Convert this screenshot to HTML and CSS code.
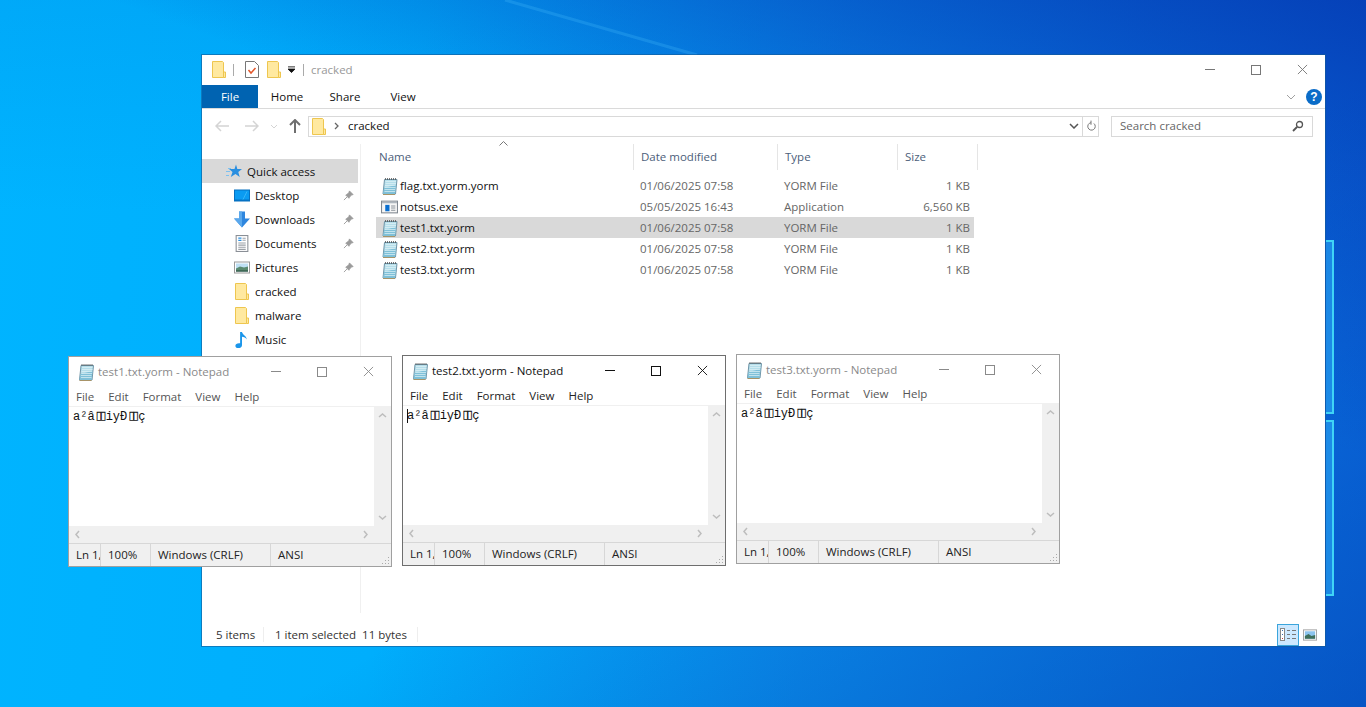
FILE: index.html
```html
<!DOCTYPE html>
<html lang="en">

<head>
    <meta charset="utf-8">
    <title>cracked</title>
    <link rel="stylesheet" href="styles.css">
</head>

<body>
    <svg width="0" height="0" class="defs">
        <symbol id="i-folder" viewBox="0 0 14 17">
            <path d="M.5.5h10l1 1v15H.5z" fill="#ffe9a0" stroke="#eec64f" />
            <path d="M11.500 11h2v5.500h-2z" fill="#ffe9a0" stroke="#eec64f" />
        </symbol>
        <symbol id="i-note" viewBox="0 0 16 18">
            <path d="M3 2.500h12.500L14 17H1.500z" fill="#b5deea" stroke="#6f95a8" />
            <path d="M2.500 11l12-3-1 9H1.500z" fill="#7fc0d8" />
            <path d="M4 4.500h10.500M4 6.500h10.500M3.500 8.500h10.500M3.500 10.500h10.500M3 12.500h10.500M3 14.500h10.500" stroke="#dff2f7" stroke-width=".7" />
            <path d="M4 1v2M6 1v2M8 1v2M10 1v2M12 1v2M14 1v2" stroke="#555" stroke-width=".8" />
            <path d="M1.500 17.500h12" stroke="#a89468" />
        </symbol>
        <symbol id="i-exe" viewBox="0 0 16 14">
            <rect x=".5" y="1.500" width="15" height="11" fill="#f6f6f6" stroke="#808891" />
            <path d="M1 2h14v1.500H1z" fill="#aeb6be" />
            <rect x="4" y="5" width="4" height="6" fill="#0a6fd0" />
            <path d="M9.500 6h4M9.500 8h4M9.500 10h4" stroke="#8a929a" />
        </symbol>
        <symbol id="i-star" viewBox="0 0 16 16">
            <path d="M10 1l1.300 4.500h4.700l-3.700 2.900 1.400 5.100-4.200-3-4.700 3 1.700-5.100L3 5.500h5.500z" fill="#2a8fe0" />
            <path d="M0 8h4M2 5h3M0 12h3" stroke="#7cc0f0" />
        </symbol>
        <symbol id="i-desktop" viewBox="0 0 16 14">
            <rect x=".5" y="1.500" width="15" height="11" fill="#0a9bf2" stroke="#0670c0" />
            <path d="M1 11h14v1.500H1z" fill="#0572c4" />
            <path d="M9 11l4-8" stroke="#36b4f8" />
        </symbol>
        <symbol id="i-down" viewBox="0 0 16 16">
            <path d="M5 0h6v7h5l-8 9-8-9h5z" fill="#2f86de" />
            <path d="M5 0h3v16L0 7h5z" fill="#5aa8ec" />
        </symbol>
        <symbol id="i-docs" viewBox="0 0 14 16">
            <rect x="1.500" y=".5" width="11" height="15" fill="#fff" stroke="#8a8f96" />
            <path d="M3.500 3h3M3.500 5h3" stroke="#2a8fe0" stroke-width="1.200" />
            <path d="M7.500 3h3M7.500 5h3M3.500 7.500h7M3.500 9.500h7M3.500 11.500h7M3.500 13.500h7" stroke="#9aa0a6" />
        </symbol>
        <symbol id="i-pics" viewBox="0 0 16 14">
            <rect x=".5" y="1.500" width="15" height="11" fill="#fff" stroke="#9a9a9a" />
            <rect x="2" y="3" width="12" height="8" fill="#bfe0f4" />
            <path d="M2 8l4-2 4 1 4-1v5H2z" fill="#5a8a70" />
            <path d="M2 10h12v1H2z" fill="#274a3c" />
        </symbol>
        <symbol id="i-music" viewBox="0 0 14 18">
            <path d="M5 1h2c.5 3 5 4 5 8-1-2-3-3-5-3v9c0 2-2 3-4 3s-3-1-3-2.500S2 12.500 5 13z" fill="#1b96ea" />
        </symbol>
        <symbol id="i-pin" viewBox="0 0 12 12">
            <path d="M7 1l4 4-2 .5L7 8 6.500 9 3 5.500 4 5l2.500-2zM4.500 7.500L1 11" fill="#9a9a9a" stroke="#9a9a9a" />
        </symbol>
        <symbol id="i-close" viewBox="0 0 12 12">
            <path d="M1 1l10 10M11 1L1 11" stroke="currentColor" fill="none" />
        </symbol>
    </svg>

    <svg class="beams" width="1366" height="707">
        <path d="M505 0L697 55" stroke="#3fb4f8" stroke-width="3" opacity=".3" />
        <path d="M1326 241h7v172h-7M1326 421h7v174h-7" fill="#2aa6f5" fill-opacity=".6" stroke="#3fd4f6" stroke-width="2" />
    </svg>

    <div class="explorer">
        <div class="titlebar">
            <svg class="ico-qa"><use href="#i-folder" /></svg>
            <span class="qa-sep"></span>
            <svg class="ico-check" viewBox="0 0 14 17">
                <path d="M.5.5h9l4 4v12H.5z" fill="#fff" stroke="#777" />
                <path d="M3.500 9l2.500 3 4.500-5" fill="none" stroke="#e2562a" stroke-width="1.500" />
            </svg>
            <svg class="ico-qa"><use href="#i-folder" /></svg>
            <svg class="qa-drop" viewBox="0 0 8 7">
                <path d="M0 .5h8M0 3h8L4 7z" stroke="#111" fill="#111" />
            </svg>
            <span class="qa-sep qa-sep-end"></span>
            <span class="title-text">cracked</span>
            <div class="caption">
                <span class="cap-min"></span>
                <span class="cap-max"></span>
                <svg class="cap-close"><use href="#i-close" /></svg>
            </div>
        </div>

        <div class="ribbon">
            <span class="tab tab-file">File</span>
            <span class="tab">Home</span>
            <span class="tab">Share</span>
            <span class="tab">View</span>
            <svg class="ribbon-chev" viewBox="0 0 10 6"><path d="M1 1l4 4 4-4" fill="none" stroke="#a0a0a0" /></svg>
            <span class="help">?</span>
        </div>

        <div class="addr-row">
            <svg class="nav-arrow" viewBox="0 0 14 12"><path d="M6 1L1 6l5 5M1 6h13" fill="none" stroke="#d4d4d4" stroke-width="1.500" /></svg>
            <svg class="nav-arrow" viewBox="0 0 14 12"><path d="M8 1l5 5-5 5M13 6H0" fill="none" stroke="#d4d4d4" stroke-width="1.500" /></svg>
            <svg class="nav-drop" viewBox="0 0 8 5"><path d="M1 1l3 3 3-3" fill="none" stroke="#d4d4d4" /></svg>
            <svg class="nav-arrow nav-up" viewBox="0 0 12 14"><path d="M1 6l5-5 5 5M6 1v13" fill="none" stroke="#6f6f6f" stroke-width="2" /></svg>
            <div class="addr">
                <svg class="ico-addr"><use href="#i-folder" /></svg>
                <svg class="crumb" viewBox="0 0 5 8"><path d="M1 1l3 3-3 3" fill="none" stroke="#666" stroke-width="1.300" /></svg>
                <span class="addr-text">cracked</span>
                <svg class="addr-chev" viewBox="0 0 10 6"><path d="M1 1l4 4 4-4" fill="none" stroke="#555" stroke-width="1.500" /></svg>
                <span class="addr-refresh">
                    <svg viewBox="0 0 12 13"><path d="M9.500 3.500A4.500 4.500 0 1 1 6 2.500M6 0v5" fill="none" stroke="#777" stroke-width="1.200" /></svg>
                </span>
            </div>
            <div class="search">
                <span class="search-text">Search cracked</span>
                <svg viewBox="0 0 12 12"><circle cx="7.500" cy="4.500" r="3" fill="none" stroke="#555" stroke-width="1.300" /><path d="M5 7l-4 4" stroke="#555" stroke-width="1.800" /></svg>
            </div>
        </div>

        <div class="main">
            <nav class="navpane">
                <div class="nav-item nav-head"><svg><use href="#i-star" /></svg><span>Quick access</span></div>
                <div class="nav-item"><svg><use href="#i-desktop" /></svg><span>Desktop</span><svg class="pin"><use href="#i-pin" /></svg></div>
                <div class="nav-item"><svg><use href="#i-down" /></svg><span>Downloads</span><svg class="pin"><use href="#i-pin" /></svg></div>
                <div class="nav-item"><svg><use href="#i-docs" /></svg><span>Documents</span><svg class="pin"><use href="#i-pin" /></svg></div>
                <div class="nav-item"><svg><use href="#i-pics" /></svg><span>Pictures</span><svg class="pin"><use href="#i-pin" /></svg></div>
                <div class="nav-item"><svg><use href="#i-folder" /></svg><span>cracked</span></div>
                <div class="nav-item"><svg><use href="#i-folder" /></svg><span>malware</span></div>
                <div class="nav-item"><svg><use href="#i-music" /></svg><span>Music</span></div>
            </nav>
            <div class="files">
                <div class="file-head">
                    <span class="col-name">Name<svg class="sort" viewBox="0 0 9 5"><path d="M.5 4.500l4-4 4 4" fill="none" stroke="#777" /></svg></span>
                    <span class="col-date">Date modified</span>
                    <span class="col-type">Type</span>
                    <span class="col-size">Size</span>
                </div>
                <div class="file-row">
                    <span class="col-name"><svg><use href="#i-note" /></svg>flag.txt.yorm.yorm</span>
                    <span class="col-date">01/06/2025 07:58</span>
                    <span class="col-type">YORM File</span>
                    <span class="col-size">1 KB</span>
                </div>
                <div class="file-row">
                    <span class="col-name"><svg><use href="#i-exe" /></svg>notsus.exe</span>
                    <span class="col-date">05/05/2025 16:43</span>
                    <span class="col-type">Application</span>
                    <span class="col-size">6,560 KB</span>
                </div>
                <div class="file-row selected">
                    <span class="col-name"><svg><use href="#i-note" /></svg>test1.txt.yorm</span>
                    <span class="col-date">01/06/2025 07:58</span>
                    <span class="col-type">YORM File</span>
                    <span class="col-size">1 KB</span>
                </div>
                <div class="file-row">
                    <span class="col-name"><svg><use href="#i-note" /></svg>test2.txt.yorm</span>
                    <span class="col-date">01/06/2025 07:58</span>
                    <span class="col-type">YORM File</span>
                    <span class="col-size">1 KB</span>
                </div>
                <div class="file-row">
                    <span class="col-name"><svg><use href="#i-note" /></svg>test3.txt.yorm</span>
                    <span class="col-date">01/06/2025 07:58</span>
                    <span class="col-type">YORM File</span>
                    <span class="col-size">1 KB</span>
                </div>
            </div>
        </div>

        <div class="statusbar">
            <span class="st-count">5 items</span>
            <span class="st-sel">1 item selected</span>
            <span class="st-bytes">11 bytes</span>
            <div class="views">
                <span class="view-btn view-on">
                    <svg viewBox="0 0 17 13"><rect x=".5" y=".5" width="4" height="12" fill="#fff" stroke="#888" /><path d="M2 2.500h1" stroke="#3a6fb0" /><path d="M2 6.500h1" stroke="#3a6fb0" /><path d="M2 10.500h1" stroke="#c04040" /><path d="M7 2.500h3M12 2.500h4M7 6.500h3M12 6.500h4M7 10.500h3M12 10.500h4" stroke="#777" stroke-width="1.200" /></svg>
                </span>
                <span class="view-btn view-big">
                    <svg viewBox="0 0 15 12"><rect x=".5" y=".5" width="14" height="11" fill="#fff" stroke="#a0a0a0" /><rect x="2" y="2" width="11" height="8" fill="#8cc4ee" /><path d="M2 7l4-2 3 2 4-1v4H2z" fill="#3f6f5a" /></svg>
                </span>
            </div>
        </div>
    </div>

    <div class="notepad np-1">
        <div class="np-title">
            <svg class="np-ico"><use href="#i-note" /></svg>
            <span class="np-name">test1.txt.yorm - Notepad</span>
            <div class="np-caption">
                <span class="cap-min"></span>
                <span class="cap-max"></span>
                <svg class="cap-close"><use href="#i-close" /></svg>
            </div>
        </div>
        <div class="np-menu"><span>File</span><span>Edit</span><span>Format</span><span>View</span><span>Help</span></div>
        <div class="np-body">
            <div class="np-text">a²â<span class="tofu">▯▯</span>iyÐ<span class="tofu">▯▯</span>ç</div>
            <div class="np-vscroll">
                <svg viewBox="0 0 9 5"><path d="M1 4l3.500-3L8 4" fill="none" stroke="#bdbdbd" stroke-width="1.500" /></svg>
                <svg viewBox="0 0 9 5"><path d="M1 1l3.500 3L8 1" fill="none" stroke="#bdbdbd" stroke-width="1.500" /></svg>
            </div>
        </div>
        <div class="np-hscroll">
            <svg viewBox="0 0 5 9"><path d="M4 1L1 4.500 4 8" fill="none" stroke="#bdbdbd" stroke-width="1.500" /></svg>
            <svg viewBox="0 0 5 9"><path d="M1 1l3 3.500L1 8" fill="none" stroke="#bdbdbd" stroke-width="1.500" /></svg>
        </div>
        <div class="np-status">
            <span class="s-ln">Ln 1,</span><span class="s-zoom">100%</span><span class="s-eol">Windows (CRLF)</span><span class="s-enc">ANSI</span>
            <svg class="grip" viewBox="0 0 9 9"><path d="M7 1h1v1H7zM4 4h1v1H4zM7 4h1v1H7zM1 7h1v1H1zM4 7h1v1H4zM7 7h1v1H7z" fill="#aaa" /></svg>
        </div>
    </div>

    <div class="notepad np-2 active">
        <div class="np-title">
            <svg class="np-ico"><use href="#i-note" /></svg>
            <span class="np-name">test2.txt.yorm - Notepad</span>
            <div class="np-caption">
                <span class="cap-min"></span>
                <span class="cap-max"></span>
                <svg class="cap-close"><use href="#i-close" /></svg>
            </div>
        </div>
        <div class="np-menu"><span>File</span><span>Edit</span><span>Format</span><span>View</span><span>Help</span></div>
        <div class="np-body">
            <div class="np-text"><i class="caret"></i>a²â<span class="tofu">▯▯</span>iyÐ<span class="tofu">▯▯</span>ç</div>
            <div class="np-vscroll">
                <svg viewBox="0 0 9 5"><path d="M1 4l3.500-3L8 4" fill="none" stroke="#bdbdbd" stroke-width="1.500" /></svg>
                <svg viewBox="0 0 9 5"><path d="M1 1l3.500 3L8 1" fill="none" stroke="#bdbdbd" stroke-width="1.500" /></svg>
            </div>
        </div>
        <div class="np-hscroll">
            <svg viewBox="0 0 5 9"><path d="M4 1L1 4.500 4 8" fill="none" stroke="#bdbdbd" stroke-width="1.500" /></svg>
            <svg viewBox="0 0 5 9"><path d="M1 1l3 3.500L1 8" fill="none" stroke="#bdbdbd" stroke-width="1.500" /></svg>
        </div>
        <div class="np-status">
            <span class="s-ln">Ln 1,</span><span class="s-zoom">100%</span><span class="s-eol">Windows (CRLF)</span><span class="s-enc">ANSI</span>
            <svg class="grip" viewBox="0 0 9 9"><path d="M7 1h1v1H7zM4 4h1v1H4zM7 4h1v1H7zM1 7h1v1H1zM4 7h1v1H4zM7 7h1v1H7z" fill="#aaa" /></svg>
        </div>
    </div>

    <div class="notepad np-3">
        <div class="np-title">
            <svg class="np-ico"><use href="#i-note" /></svg>
            <span class="np-name">test3.txt.yorm - Notepad</span>
            <div class="np-caption">
                <span class="cap-min"></span>
                <span class="cap-max"></span>
                <svg class="cap-close"><use href="#i-close" /></svg>
            </div>
        </div>
        <div class="np-menu"><span>File</span><span>Edit</span><span>Format</span><span>View</span><span>Help</span></div>
        <div class="np-body">
            <div class="np-text">a²â<span class="tofu">▯▯</span>iyÐ<span class="tofu">▯▯</span>ç</div>
            <div class="np-vscroll">
                <svg viewBox="0 0 9 5"><path d="M1 4l3.500-3L8 4" fill="none" stroke="#bdbdbd" stroke-width="1.500" /></svg>
                <svg viewBox="0 0 9 5"><path d="M1 1l3.500 3L8 1" fill="none" stroke="#bdbdbd" stroke-width="1.500" /></svg>
            </div>
        </div>
        <div class="np-hscroll">
            <svg viewBox="0 0 5 9"><path d="M4 1L1 4.500 4 8" fill="none" stroke="#bdbdbd" stroke-width="1.500" /></svg>
            <svg viewBox="0 0 5 9"><path d="M1 1l3 3.500L1 8" fill="none" stroke="#bdbdbd" stroke-width="1.500" /></svg>
        </div>
        <div class="np-status">
            <span class="s-ln">Ln 1,</span><span class="s-zoom">100%</span><span class="s-eol">Windows (CRLF)</span><span class="s-enc">ANSI</span>
            <svg class="grip" viewBox="0 0 9 9"><path d="M7 1h1v1H7zM4 4h1v1H4zM7 4h1v1H7zM1 7h1v1H1zM4 7h1v1H4zM7 7h1v1H7z" fill="#aaa" /></svg>
        </div>
    </div>
</body>

</html>
```

FILE: styles.css
```css
* {
    margin: 0;
    padding: 0;
    box-sizing: border-box;
}

html,
body {
    width: 1366px;
    height: 707px;
    overflow: hidden;
}

body {
    position: relative;
    font-family: "Open Sans", "Noto Sans", sans-serif;
    font-size: 11.500px;
    color: #111;
    background:
        linear-gradient(150deg, rgba(0, 60, 180, 0) 58%, rgba(0, 50, 150, .4) 100%),
        linear-gradient(200deg, rgba(5, 60, 180, .9) 0%, rgba(5, 80, 200, 0) 38%),
        linear-gradient(180deg, rgba(0, 120, 220, .18) 0%, rgba(0, 120, 220, 0) 30%),
        linear-gradient(95deg, #00b4ff 0%, #00aefc 30%, #0a8cee 60%, #0a6ce4 100%);
}

svg {
    display: block;
    flex: none;
}

.defs {
    position: absolute;
}

.beams {
    position: absolute;
    left: 0;
    top: 0;
}

/* explorer window */
.explorer {
    position: absolute;
    left: 202px;
    top: 55px;
    width: 1123px;
    height: 591px;
    background: #fff;
    display: flex;
    flex-direction: column;
    box-shadow: 0 0 0 1px rgba(20, 90, 150, .6);
}

.titlebar {
    height: 30px;
    display: flex;
    align-items: center;
    padding: 0 0 1px 10px;
}

.ico-qa {
    width: 14px;
    height: 17px;
}

.qa-sep {
    width: 1px;
    height: 12px;
    background: #aaa;
    margin: 0 11px 0 7px;
}

.ico-check {
    width: 14px;
    height: 17px;
    margin-right: 8px;
}

.qa-drop {
    width: 7px;
    height: 7px;
    margin-left: 7px;
}

.title-text {
    color: #999;
}

.titlebar .qa-sep-end {
    margin: 0 7px 0 8px;
}

.caption,
.np-caption {
    margin-left: auto;
    display: flex;
    align-items: center;
    color: #777;
}

.caption {
    gap: 36px;
    padding-right: 17px;
}

.cap-min {
    width: 10px;
    height: 1px;
    background: currentColor;
}

.cap-max {
    width: 10px;
    height: 10px;
    border: 1px solid currentColor;
}

.cap-close {
    width: 11px;
    height: 11px;
}

.ribbon {
    height: 24px;
    display: flex;
    align-items: center;
    border-bottom: 1px solid #dadada;
}

.tab {
    width: 58px;
    text-align: center;
    line-height: 23px;
}

.tab-file {
    width: 56px;
    height: 23px;
    background: #0063b1;
    color: #fff;
}

.ribbon-chev {
    width: 10px;
    height: 6px;
    margin-left: auto;
}

.help {
    width: 16px;
    height: 16px;
    margin: 0 3px 0 10px;
    border-radius: 50%;
    background: #0a6cc8;
    color: #fff;
    font: bold 12px/16px "Liberation Sans", sans-serif;
    text-align: center;
}

.addr-row {
    height: 34px;
    display: flex;
    align-items: center;
    padding: 0 12px 0 13px;
}

.nav-arrow {
    width: 14px;
    height: 12px;
    margin-right: 16px;
}

.nav-drop {
    width: 8px;
    height: 5px;
    margin: 0 11px 0 -5px;
}

.nav-up {
    width: 12px;
    height: 14px;
    margin-right: 7px;
}

.addr {
    width: 791px;
    height: 21px;
    display: flex;
    align-items: center;
    border: 1px solid #d9d9d9;
    padding-left: 3px;
}

.addr-text,
.search-text {
    padding-bottom: 2px;
}

.ico-addr {
    width: 14px;
    height: 17px;
}

.crumb {
    width: 5px;
    height: 8px;
    margin: 0 9px 0 8px;
}

.addr-chev {
    width: 10px;
    height: 6px;
    margin-left: auto;
}

.addr-refresh {
    width: 16px;
    height: 19px;
    margin-left: 3px;
    border-left: 1px solid #d9d9d9;
    display: flex;
    align-items: center;
    justify-content: center;
}

.addr-refresh svg {
    width: 10px;
    height: 12px;
}

.search {
    width: 202px;
    height: 21px;
    margin-left: auto;
    display: flex;
    align-items: center;
    justify-content: space-between;
    border: 1px solid #d9d9d9;
    padding: 0 8px;
    color: #666;
}

.search svg {
    width: 12px;
    height: 12px;
}

.main {
    flex: 1;
    display: flex;
    min-height: 0;
    padding-top: 1px;
}

.navpane {
    width: 159px;
    padding-top: 15px;
    border-right: 1px solid #f0f0f0;
    margin-bottom: 10px;
}

.nav-item {
    height: 24px;
    width: 156px;
    display: flex;
    align-items: center;
    padding-left: 32px;
}

.nav-item svg {
    width: 16px;
    height: 17px;
    margin-right: 5px;
}

.nav-head {
    background: #d9d9d9;
    padding-left: 24px;
}

.nav-item .pin {
    width: 11px;
    height: 11px;
    margin: 0 4px 0 auto;
}

.files {
    flex: 1;
    padding-left: 15px;
}

.file-head,
.file-row {
    display: flex;
    align-items: center;
}

.file-row {
    width: 598px;
    height: 21px;
    color: #666;
}

.file-head {
    height: 26px;
    margin-bottom: 5px;
    color: #4c607a;
}

.file-head span {
    align-self: stretch;
    display: flex;
    align-items: center;
    padding-bottom: 2px;
    border-right: 1px solid #e5e5e5;
}

.col-name {
    width: 258px;
    padding-left: 3px;
    position: relative;
}

.file-row .col-name {
    width: 257px;
    display: flex;
    align-items: center;
    color: #111;
    padding-left: 5px;
}

.file-row .col-name svg {
    width: 17px;
    height: 18px;
    margin-right: 2px;
}

.sort {
    position: absolute;
    left: 123px;
    top: -3px;
    width: 9px;
    height: 5px;
}

.col-date {
    width: 144px;
    padding-left: 7px;
}

.col-type {
    width: 120px;
    padding-left: 7px;
}

.col-size {
    width: 80px;
    padding-left: 7px;
}

.file-row .col-size {
    width: 77px;
    text-align: right;
    padding-right: 4px;
}

.selected {
    background: #d9d9d9;
}

.statusbar {
    height: 23px;
    display: flex;
    align-items: center;
    padding-left: 14px;
    color: #333;
}

.st-count {
    width: 48px;
    border-right: 1px solid #eee;
    margin-right: 11px;
}

.st-sel {
    margin-right: 6px;
}

.st-bytes {
    padding-right: 10px;
    border-right: 1px solid #eee;
}

.views {
    margin-left: auto;
    display: flex;
    align-items: center;
    gap: 4px;
    padding-right: 8px;
}

.view-btn {
    height: 22px;
    display: flex;
    align-items: center;
    justify-content: center;
}

.view-on {
    width: 22px;
    background: #cce8ff;
    border: 1px solid #3ba5dc;
}

.view-big {
    width: 14px;
}

.view-on svg {
    width: 17px;
    height: 13px;
}

.view-big svg {
    width: 14px;
    height: 12px;
}

/* notepad windows */
.notepad {
    position: absolute;
    width: 324px;
    height: 211px;
    background: #fff;
    border: 1px solid #a0a0a0;
    display: flex;
    flex-direction: column;
}

.np-1 {
    left: 68px;
    top: 356px;
}

.np-2 {
    left: 402px;
    top: 355px;
}

.np-3 {
    left: 736px;
    top: 354px;
    height: 210px;
}

.np-3 .np-menu {
    height: 19px;
}

.np-2.active {
    border-color: #6e6e6e;
}

.np-title {
    height: 29px;
    display: flex;
    align-items: center;
    padding-left: 9px;
    color: #8a8a8a;
}

.active .np-title {
    color: #111;
}

.np-ico {
    width: 16px;
    height: 18px;
    margin-right: 4px;
}

.np-name {
    font-size: 11.500px;
}

.np-caption {
    gap: 36px;
    padding-right: 17px;
    color: #8a8a8a;
}

.active .np-caption {
    color: #111;
}

.np-menu {
    height: 20px;
    display: flex;
    gap: 14px;
    padding-left: 7px;
    align-items: center;
    color: #555;
}

.active .np-menu {
    color: #222;
}

.np-body {
    flex: 1;
    display: flex;
    min-height: 0;
    border-top: 1px solid #f0f0f0;
}

.np-text {
    flex: 1;
    padding: 3px 4px;
    font: 12px/14px "Liberation Mono", "DejaVu Sans Mono", monospace;
    color: #111;
    white-space: nowrap;
}

.tofu {
    font-family: "DejaVu Sans Mono", monospace;
    font-size: 15px;
    line-height: 0;
    letter-spacing: -5px;
    margin-right: 3px;
}

.caret {
    display: inline-block;
    width: 1px;
    height: 14px;
    background: #111;
    vertical-align: top;
    margin-right: -1px;
}

.np-vscroll {
    width: 17px;
    background: #f0f0f0;
    display: flex;
    flex-direction: column;
    justify-content: space-between;
    align-items: center;
    padding: 6px 0;
}

.np-vscroll svg {
    width: 9px;
    height: 5px;
}

.np-hscroll {
    height: 17px;
    background: #f0f0f0;
    display: flex;
    justify-content: space-between;
    align-items: center;
    padding: 0 23px 0 6px;
}

.np-hscroll svg {
    width: 5px;
    height: 9px;
}

.np-status {
    height: 23px;
    background: #f0f0f0;
    border-top: 1px solid #d7d7d7;
    display: flex;
    align-items: center;
    color: #222;
    position: relative;
}

.np-status span {
    height: 100%;
    line-height: 22px;
    border-right: 1px solid #d7d7d7;
    padding-left: 7px;
    overflow: hidden;
    white-space: nowrap;
}

.s-ln {
    width: 32px;
}

.s-zoom {
    width: 50px;
}

.s-eol {
    width: 120px;
}

.np-status .s-enc {
    border-right: 0;
}

.grip {
    position: absolute;
    right: 1px;
    bottom: 1px;
    width: 9px;
    height: 9px;
}
```
